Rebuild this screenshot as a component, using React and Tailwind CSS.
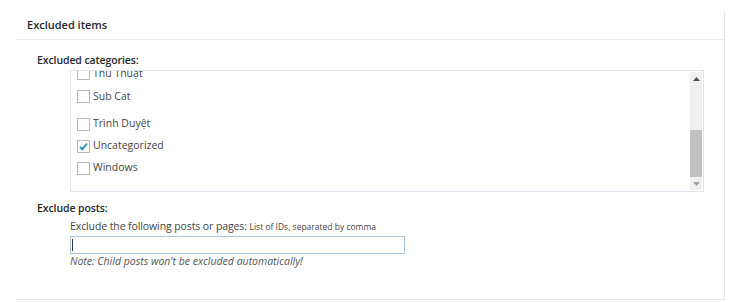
import React from 'react';

const font = { fontFamily: '"Open Sans", "Noto Sans", Arial, sans-serif' };

const categories = [
  { name: 'Thủ Thuật', checked: false, h: 'h-[23px]' },
  { name: 'Sub Cat', checked: false, h: 'h-[23px]', gapAfter: true },
  { name: 'Trình Duyệt', checked: false, h: 'h-[22px]' },
  { name: 'Uncategorized', checked: true, h: 'h-[22px]' },
  { name: 'Windows', checked: false, h: 'h-[22px]' },
];

function Box({ checked }) {
  return (
    <span className="w-[13px] h-[13px] border border-[#b4b9be] bg-white flex items-center justify-center shrink-0 mr-[3px]">
      {checked && (
        <svg width="11" height="11" viewBox="0 0 11 11">
          <path d="M2 5.8 L4.3 8.3 L9 2.5" fill="none" stroke="#1e8cbe" strokeWidth="1.8" />
        </svg>
      )}
    </span>
  );
}

function Scrollbar() {
  return (
    <div className="w-[12px] my-[1px] mr-[1px] bg-[#f0f0f0] flex flex-col items-center">
      <div className="h-[14px] flex items-center justify-center">
        <svg width="7" height="4" viewBox="0 0 7 4"><path d="M0 4 L3.5 0 L7 4Z" fill="#505050" /></svg>
      </div>
      <div className="flex-1 w-full flex flex-col justify-end">
        <div className="h-[47px] w-full bg-[#c1c1c1]" />
        <div className="h-[1px]" />
      </div>
      <div className="h-[12px] flex items-center justify-center">
        <svg width="7" height="4" viewBox="0 0 7 4"><path d="M0 0 L3.5 4 L7 0Z" fill="#a0a0a0" /></svg>
      </div>
    </div>
  );
}

export default function App() {
  return (
    <div className="w-[737px] h-[302px] bg-white" style={font}>
      <div className="ml-[16px] pt-[12px] w-[709px]">
        <div className="border-r border-b border-[#e5e5e5] h-[288px] flex flex-col">
          <div className="h-[28px] border-b border-[#eeeeee] px-[11px] flex items-center">
            <h2 className="text-[11px] font-semibold text-[#23282d]">Excluded items</h2>
          </div>

          <div className="pl-[21px] pt-[13px]">
            <p className="text-[10.5px] tracking-[-0.1px] font-semibold text-[#23282d] leading-[14px]">Excluded categories:</p>

            <div className="ml-[33px] mt-[3px] w-[634px] h-[122px] border border-[#dde6ee] flex">
              <div className="flex-1 overflow-hidden">
                <ul className="-mt-[9px] pl-[6px]">
                  {categories.map((c) => (
                    <li key={c.name} className={`${c.h} flex items-center text-[10.5px] text-[#444] ${c.gapAfter ? 'mb-[5px]' : ''}`}>
                      <Box checked={c.checked} />
                      {c.name}
                    </li>
                  ))}
                </ul>
              </div>
              <Scrollbar />
            </div>

            <p className="mt-[9px] text-[10.5px] tracking-[-0.1px] font-semibold text-[#23282d] leading-[14px]">Exclude posts:</p>

            <div className="ml-[33px] mt-[4px]">
              <label className="text-[10.5px] tracking-[-0.1px] text-[#444] leading-[14px] block">
                Exclude the following posts or pages: <span className="text-[8.5px] tracking-normal">List of IDs, separated by comma</span>
              </label>
              <div className="mt-[2px] w-[335px] h-[18px] border border-[#a8c6e0] flex items-center pl-[1px]">
                <span className="w-[1px] h-[12px] bg-[#333]" />
              </div>
              <p className="mt-[0px] text-[10.5px] italic text-[#555] leading-[14px]">Note: Child posts won't be excluded automatically!</p>
            </div>
          </div>
        </div>
      </div>
    </div>
  );
}
